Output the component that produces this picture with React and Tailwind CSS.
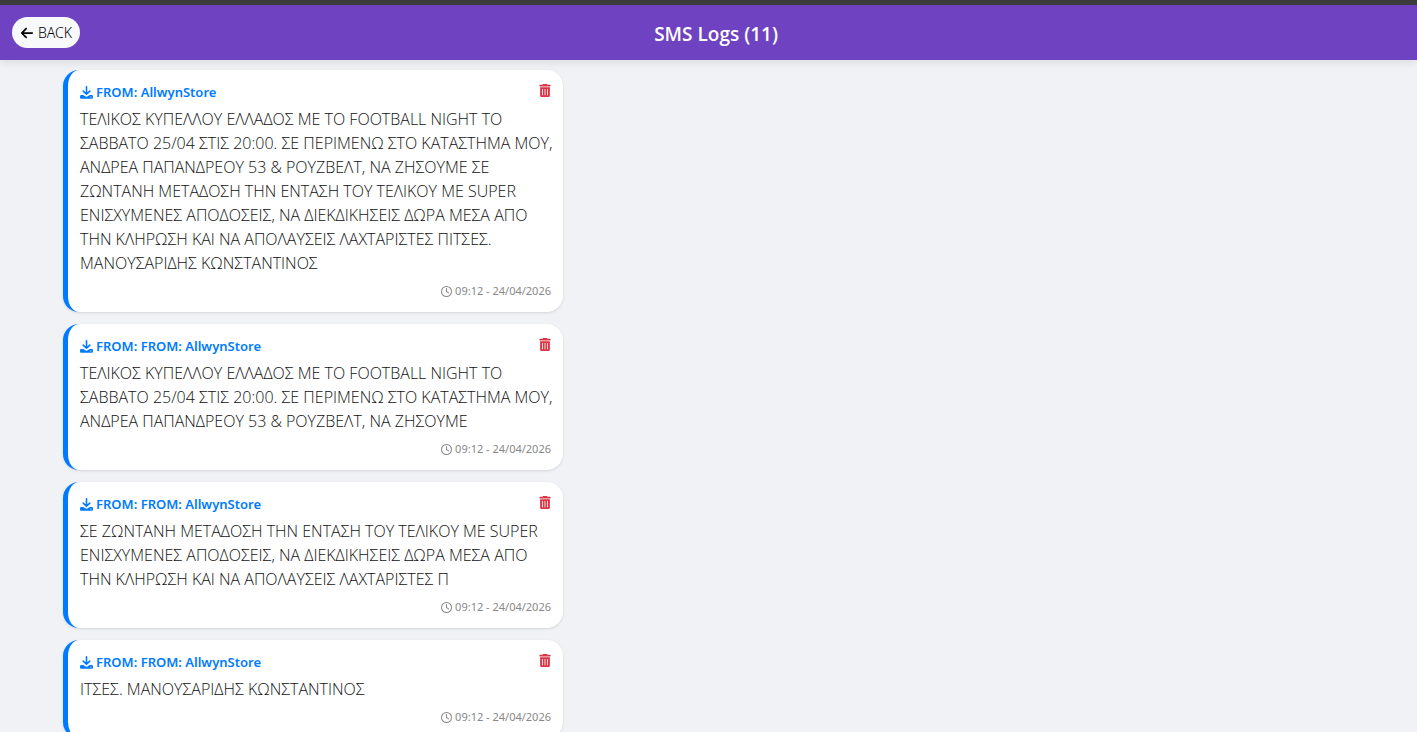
import React, { useState } from 'react';
import { FaArrowLeft, FaRegClock, FaTrashCan } from 'react-icons/fa6';

const initialLogs = [
  {
    id: 1,
    from: 'AllwynStore',
    text: 'ΤΕΛΙΚΟΣ ΚΥΠΕΛΛΟΥ ΕΛΛΑΔΟΣ ΜΕ ΤΟ FOOTBALL NIGHT ΤΟ ΣΑΒΒΑΤΟ 25/04 ΣΤΙΣ 20:00. ΣΕ ΠΕΡΙΜΕΝΩ ΣΤΟ ΚΑΤΑΣΤΗΜΑ ΜΟΥ, ΑΝΔΡΕΑ ΠΑΠΑΝΔΡΕΟΥ 53 & ΡΟΥΖΒΕΛΤ, ΝΑ ΖΗΣΟΥΜΕ ΣΕ ΖΩΝΤΑΝΗ ΜΕΤΑΔΟΣΗ ΤΗΝ ΕΝΤΑΣΗ ΤΟΥ ΤΕΛΙΚΟΥ ΜΕ SUPER ΕΝΙΣΧΥΜΕΝΕΣ ΑΠΟΔΟΣΕΙΣ, ΝΑ ΔΙΕΚΔΙΚΗΣΕΙΣ ΔΩΡΑ ΜΕΣΑ ΑΠΟ ΤΗΝ ΚΛΗΡΩΣΗ ΚΑΙ ΝΑ ΑΠΟΛΑΥΣΕΙΣ ΛΑΧΤΑΡΙΣΤΕΣ ΠΙΤΣΕΣ. ΜΑΝΟΥΣΑΡΙΔΗΣ ΚΩΝΣΤΑΝΤΙΝΟΣ',
    time: '09:12 - 24/04/2026',
  },
  {
    id: 2,
    from: 'FROM: AllwynStore',
    text: 'ΤΕΛΙΚΟΣ ΚΥΠΕΛΛΟΥ ΕΛΛΑΔΟΣ ΜΕ ΤΟ FOOTBALL NIGHT ΤΟ ΣΑΒΒΑΤΟ 25/04 ΣΤΙΣ 20:00. ΣΕ ΠΕΡΙΜΕΝΩ ΣΤΟ ΚΑΤΑΣΤΗΜΑ ΜΟΥ, ΑΝΔΡΕΑ ΠΑΠΑΝΔΡΕΟΥ 53 & ΡΟΥΖΒΕΛΤ, ΝΑ ΖΗΣΟΥΜΕ',
    time: '09:12 - 24/04/2026',
  },
  {
    id: 3,
    from: 'FROM: AllwynStore',
    text: 'ΣΕ ΖΩΝΤΑΝΗ ΜΕΤΑΔΟΣΗ ΤΗΝ ΕΝΤΑΣΗ ΤΟΥ ΤΕΛΙΚΟΥ ΜΕ SUPER ΕΝΙΣΧΥΜΕΝΕΣ ΑΠΟΔΟΣΕΙΣ, ΝΑ ΔΙΕΚΔΙΚΗΣΕΙΣ ΔΩΡΑ ΜΕΣΑ ΑΠΟ ΤΗΝ ΚΛΗΡΩΣΗ ΚΑΙ ΝΑ ΑΠΟΛΑΥΣΕΙΣ ΛΑΧΤΑΡΙΣΤΕΣ Π',
    time: '09:12 - 24/04/2026',
  },
  {
    id: 4,
    from: 'FROM: AllwynStore',
    text: 'ΙΤΣΕΣ. ΜΑΝΟΥΣΑΡΙΔΗΣ ΚΩΝΣΤΑΝΤΙΝΟΣ',
    time: '09:12 - 24/04/2026',
  },
];

// Arrow dropping into a tray
function InboxIcon() {
  return (
    <svg viewBox="0 0 13 13" className="size-[13px]" fill="none" stroke="currentColor" aria-hidden="true">
      <path d="M6.5 .8v7.2M3.2 5.1l3.3 3.2 3.3-3.2" strokeWidth="1.6" strokeLinecap="round" strokeLinejoin="round" />
      <path
        d="M1.3 8.9h2.1l1.7 1.3c.8.6 2 .6 2.8 0l1.7-1.3h2.1c.7 0 1.3.6 1.3 1.3v1.3c0 .7-.6 1.3-1.3 1.3H1.3C.6 12.8 0 12.2 0 11.5v-1.3c0-.7.6-1.3 1.3-1.3Zm9.5 1.5a.6.6 0 1 0 0 1.2.6.6 0 0 0 0-1.2Z"
        fill="currentColor"
        fillRule="evenodd"
        stroke="none"
      />
    </svg>
  );
}

function SmsCard({ log, onDelete }) {
  return (
    <article className="w-full max-w-[500px] rounded-2xl border-l-5 border-[#007bff] bg-white p-3 shadow-sm">
      <div className="flex items-start justify-between">
        <h2 className="flex items-center gap-[3px] font-['Noto_Sans',sans-serif] text-[13px] leading-5 font-semibold text-[#007bff]">
          <InboxIcon />
          FROM: {log.from}
        </h2>
        <button
          type="button"
          onClick={() => onDelete(log.id)}
          aria-label="Delete message"
          className="flex h-4 w-3 cursor-pointer items-center justify-center text-[13px] text-[#dc3545]"
        >
          <FaTrashCan />
        </button>
      </div>
      <p className="mt-[5px] -mr-1 text-base leading-6 font-light text-[#111]">{log.text}</p>
      <div className="mt-2 mb-px flex items-center justify-end gap-[3px] font-['Noto_Sans',sans-serif] text-[11px] leading-4 text-[#888]">
        <FaRegClock />
        <time>{log.time}</time>
      </div>
    </article>
  );
}

function App() {
  const [logs, setLogs] = useState(initialLogs);

  const handleDelete = (id) => setLogs(prev => prev.filter(l => l.id !== id));

  return (
    <div className="h-screen overflow-hidden bg-[#f0f2f5] font-['Open_Sans','Noto_Sans',sans-serif]">
      {/* Top bar */}
      <header className="flex items-center justify-between border-t-5 border-[#3c3c3c] bg-[#6f42c1] px-3 py-3 shadow-[0_2px_10px_rgba(0,0,0,0.1)]">
        <button
          type="button"
          onClick={() => window.history.back()}
          className="flex cursor-pointer items-center gap-1 rounded-full bg-[#f8f9fa] px-2 py-1 font-['Noto_Sans',sans-serif] text-sm leading-[23px] font-light text-black"
        >
          <FaArrowLeft className="text-sm" />
          BACK
        </button>
        <h1 className="pt-0.5 text-[19px] leading-6 font-semibold text-white">SMS Logs (11)</h1>
        <div className="w-[53px]" />
      </header>
      {/* Message list */}
      <main className="flex flex-col gap-3 px-[63px] pt-[10px]">
        {logs.map(log => (
          <SmsCard key={log.id} log={log} onDelete={handleDelete} />
        ))}
      </main>
    </div>
  );
}

export default App;
